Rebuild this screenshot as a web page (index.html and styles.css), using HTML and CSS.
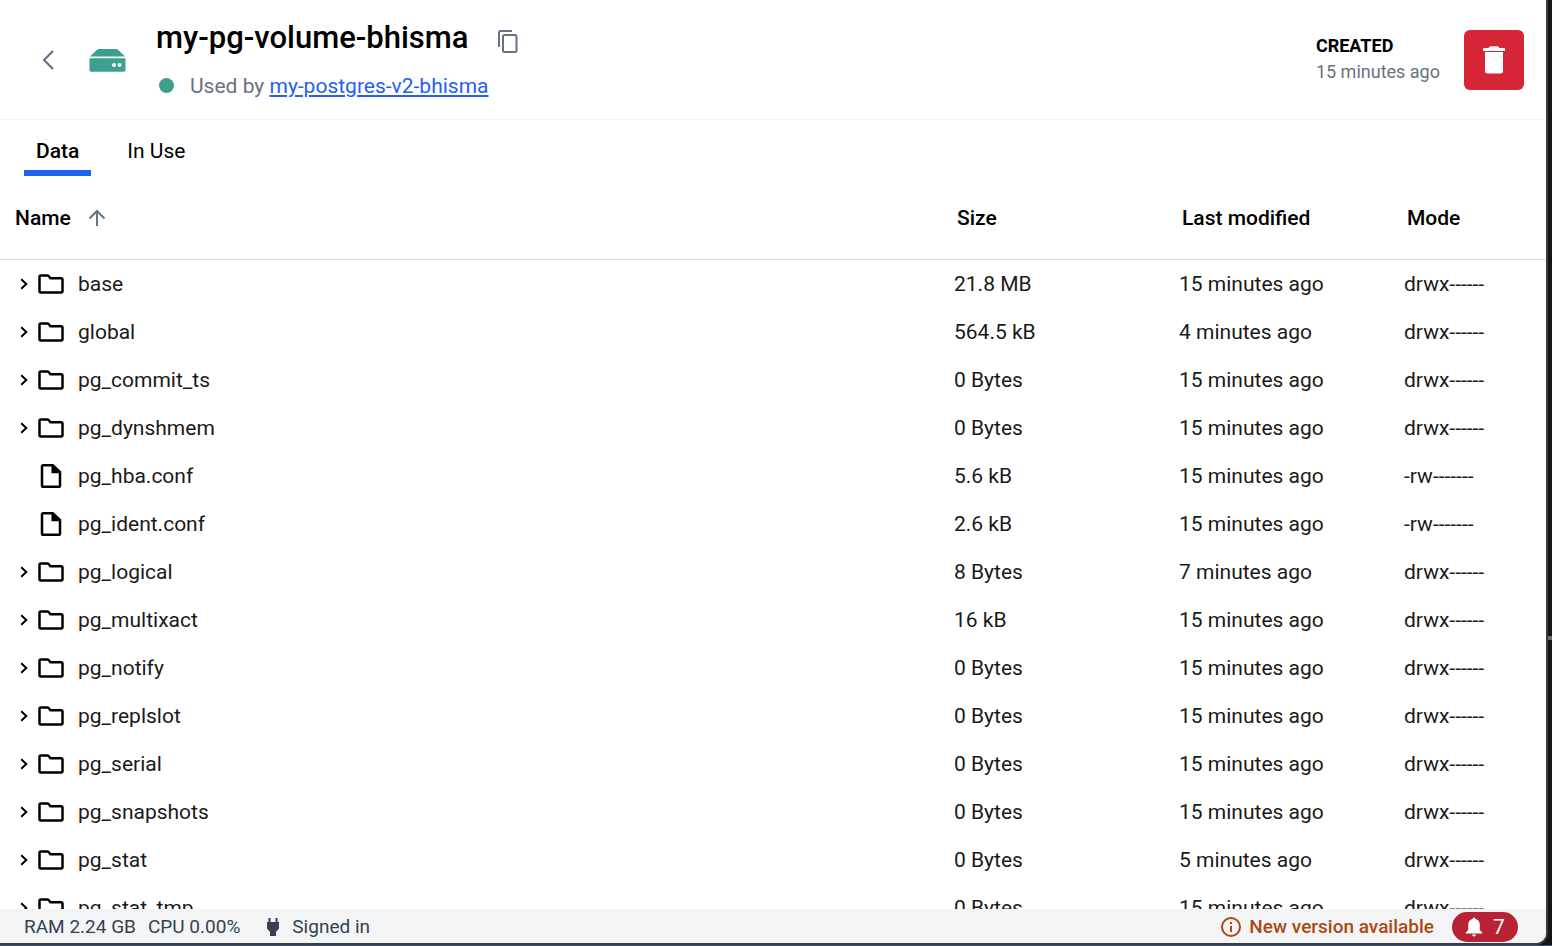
FILE: index.html
```html
<!DOCTYPE html>
<html lang="en">
<head>
<meta charset="utf-8">
<title>my-pg-volume-bhisma</title>
<link rel="stylesheet" href="styles.css">
</head>
<body>
<svg class="sprite" aria-hidden="true">
  <symbol id="chevron" viewBox="0 0 8 12"><path d="M1.2 1.2 6.3 6l-5.1 4.8" fill="none" stroke="currentColor" stroke-width="2"/></symbol>
  <symbol id="folder" viewBox="0 0 26 20"><path d="M1.5 17V2.800Q1.500 1.500 2.800 1.500h6.400q1 0 1.600.8l1.600 1.900h10.500q1.600 0 1.600 1.600V17q0 1.500-1.600 1.500H2.800Q1.500 18.500 1.500 17Z" fill="none" stroke="currentColor" stroke-width="2.500"/></symbol>
  <symbol id="file" viewBox="0 0 26 26"><path d="M4 3.500Q4 2.200 5.300 2.200h9.400L22 9v13.500q0 1.300-1.300 1.300H5.300Q4 23.800 4 22.500Z" fill="none" stroke="currentColor" stroke-width="2.500"/><path d="M13.500 1.500h1.800l7 7v1.700h-8.800Z"/></symbol>
</svg>
<div class="window">
  <header class="header">
    <button class="icon-button back" aria-label="Back"><svg width="12" height="20" viewBox="0 0 12 20"><path d="M11 1 2 10l9 9" fill="none" stroke="currentColor" stroke-width="2.200"/></svg></button>
    <svg class="drive" width="37" height="24" viewBox="0 0 37 24"><path d="M10 1h17q1 0 2 .7L36 8.500H1l7-6.800Q9 1 10 1ZM1 10.200h35.500V22q0 1.700-1.500 1.700H2Q.5 23.700.5 22V10.200Z" fill="#3ca08e"/><circle cx="25" cy="17" r="2" fill="#fff"/><circle cx="30.500" cy="17" r="2" fill="#fff"/></svg>
    <div class="heading">
      <div class="title-line">
        <h1>my-pg-volume-bhisma</h1>
        <button class="icon-button" aria-label="Copy name"><svg width="20" height="24" viewBox="0 0 20 24"><path d="M1 17V2.500Q1 1 2.500 1H14M6.500 5H17q1.500 0 1.500 1.500v14q0 1.500-1.500 1.500H6.500Q5 22 5 20.500v-14Q5 5 6.500 5Z" fill="none" stroke="currentColor" stroke-width="2"/></svg></button>
      </div>
      <p class="usage"><span class="dot"></span><span>Used by <a href="#container">my-postgres-v2-bhisma</a></span></p>
    </div>
    <div class="created"><strong>CREATED</strong><span>15 minutes ago</span></div>
    <button class="delete" aria-label="Delete volume"><svg width="22" height="28" viewBox="0 0 22 28"><path d="M0 2h5.500q.5-1.700 2.500-1.700h6q2 0 2.500 1.700H22v3H0ZM2 6h18v19q0 2.500-2.500 2.500h-13Q2 27.500 2 25Z" fill="currentColor"/></svg></button>
  </header>
  <nav class="tabs">
    <button class="tab active">Data</button>
    <button class="tab">In Use</button>
  </nav>
  <main class="files">
    <table>
      <colgroup><col><col class="col-size"><col class="col-modified"><col class="col-mode"></colgroup>
      <thead><tr>
        <th><span class="sort">Name <svg width="18" height="18" viewBox="0 0 18 18"><path d="M9 17V2M1.500 9.500 9 2l7.500 7.500" fill="none" stroke="#677285" stroke-width="2"/></svg></span></th>
        <th>Size</th><th>Last modified</th><th>Mode</th>
      </tr></thead>
      <tbody id="rows"></tbody>
    </table>
  </main>
  <footer class="status">
    <span>RAM 2.24 GB</span>
    <span>CPU 0.00%</span>
    <span class="signed"><svg width="14" height="20" viewBox="0 0 14 20"><path d="M2.500 1h2v4h5V1h2v4H13v6.500L10 15v4H4v-4l-3-3.500V5h1.500Z" fill="#364150"/></svg>Signed in</span>
    <a class="update" href="#update"><svg width="20" height="20" viewBox="0 0 20 20"><circle cx="10" cy="10" r="9" fill="none" stroke="currentColor" stroke-width="2"/><path d="M9 5h2v2H9zM9 9h2v6H9z" fill="currentColor"/></svg>New version available</a>
    <button class="alerts" aria-label="7 notifications"><svg width="18" height="20" viewBox="0 0 18 20"><path d="M9 .5q1.400 0 1.400 1.600 4.400 1 4.400 6V13l2.400 2.500v1H.8v-1L3.200 13V8.100q0-5 4.400-6Q7.600.5 9 .5ZM7 17.500h4Q10.700 19.500 9 19.500T7 17.500Z" fill="currentColor"/></svg>7</button>
  </footer>
</div>
<script src="files.js"></script>
</body>
</html>
```
FILE: styles.css
```css
* { box-sizing: border-box; }
html { height: 100%; background: #151515; }
body {
  height: 100vh;
  margin: 0;
  padding-right: 4px;
  border-bottom: 1px solid #3b5276;
  overflow: hidden;
  background: linear-gradient(#6b6b6b, #6b6b6b) 0 636px / 100% 4px no-repeat #151515;
  font-family: Roboto, "Liberation Sans", sans-serif;
  font-size: 21px;
  line-height: 24px;
  color: #000;
}
button { padding: 0; border: 0; background: none; font: inherit; color: inherit; cursor: pointer; }
svg { display: block; flex: none; }
.sprite { position: absolute; width: 0; height: 0; }
.window {
  display: flex;
  flex-direction: column;
  height: 100%;
  border: solid #3c3c3c;
  border-width: 0 2px 2px 0;
  border-bottom-right-radius: 12px;
  overflow: hidden;
  background: #fff;
}
.header {
  display: flex;
  flex: none;
  align-items: center;
  height: 120px;
  padding: 0 22px 0 42px;
  border-bottom: 1px solid #f0f1f3;
}
.icon-button { color: #677285; }
.drive { margin: 0 30px 0 35px; }
.heading { flex: 1; padding-bottom: 4px; }
.title-line { display: flex; align-items: center; gap: 29px; }
h1 { margin: 0; font-size: 31px; line-height: 40px; font-weight: 500; }
.title-line .icon-button { padding-top: 8px; }
.usage { display: flex; align-items: center; gap: 16px; margin: 16px 0 0 3px; color: #677285; }
.dot { width: 15px; height: 15px; border-radius: 50%; background: #3ca08e; }
.usage a { color: #2560f0; }
.created { display: flex; flex-direction: column; margin-right: 24px; padding-bottom: 2px; font-size: 18px; line-height: 26px; color: #677285; }
.created strong { font-weight: 700; color: #000; }
.delete { display: grid; place-items: center; width: 60px; height: 60px; border-radius: 6px; background: #d52536; color: #fff; }
.tabs { display: flex; flex: none; gap: 24px; height: 56px; padding-left: 24px; }
.tab { padding: 12px 12px 0; border-bottom: 6px solid transparent; }
.tab.active { border-color: #1d63ed; font-weight: 500; }
.files { flex: 1; min-height: 0; overflow: hidden; }
table { width: 100%; border-collapse: separate; border-spacing: 0; table-layout: fixed; }
.col-size, .col-modified { width: 225px; }
.col-mode { width: 157px; }
th { height: 84px; padding: 0 18px; border-bottom: 1px solid #dcdee1; font-weight: 500; text-align: left; }
th:first-child { padding-left: 15px; }
.sort { display: flex; align-items: center; gap: 17px; }
td { height: 48px; padding: 0 15px; color: #1a1a1a; }
td:first-child { padding-left: 20px; }
.entry { display: flex; align-items: center; color: #000; }
.toggle { width: 8px; height: 12px; margin-right: 10px; }
.glyph { width: 26px; height: 26px; margin-right: 14px; }
.entry span { color: #1a1a1a; }
.status {
  display: flex;
  flex: none;
  align-items: center;
  height: 34px;
  padding: 2px 28px 0 24px;
  gap: 12px;
  background: #f3f4f6;
  font-size: 19px;
  color: #364150;
}
.signed { display: flex; align-items: center; gap: 12px; margin-left: 14px; }
.update { display: flex; align-items: center; gap: 8px; margin: 0 6px 0 auto; font-weight: 500; color: #ac4812; text-decoration: none; }
.alerts { display: flex; align-items: center; justify-content: center; gap: 10px; width: 66px; height: 30px; border-radius: 15px; background: #b92235; color: #fff; font-size: 21px; }
```
FILE: files.js
```js
const files = [
  ["base", "21.8 MB", "15 minutes ago"],
  ["global", "564.5 kB", "4 minutes ago"],
  ["pg_commit_ts", "0 Bytes", "15 minutes ago"],
  ["pg_dynshmem", "0 Bytes", "15 minutes ago"],
  ["pg_hba.conf", "5.6 kB", "15 minutes ago"],
  ["pg_ident.conf", "2.6 kB", "15 minutes ago"],
  ["pg_logical", "8 Bytes", "7 minutes ago"],
  ["pg_multixact", "16 kB", "15 minutes ago"],
  ["pg_notify", "0 Bytes", "15 minutes ago"],
  ["pg_replslot", "0 Bytes", "15 minutes ago"],
  ["pg_serial", "0 Bytes", "15 minutes ago"],
  ["pg_snapshots", "0 Bytes", "15 minutes ago"],
  ["pg_stat", "0 Bytes", "5 minutes ago"],
  ["pg_stat_tmp", "0 Bytes", "15 minutes ago"]
];

document.getElementById("rows").innerHTML = files.map(([name, size, modified]) => {
  const isFile = name.endsWith(".conf");
  const toggle = isFile
    ? '<div class="toggle"></div>'
    : `<button class="toggle" aria-label="Expand ${name}"><svg width="8" height="12"><use href="#chevron"/></svg></button>`;
  const glyph = isFile
    ? '<svg class="glyph"><use href="#file"/></svg>'
    : '<svg class="glyph"><use href="#folder"/></svg>';
  return `<tr>
    <td><div class="entry">${toggle}${glyph}<span>${name}</span></div></td>
    <td>${size}</td><td>${modified}</td><td>${isFile ? "-rw-------" : "drwx------"}</td>
  </tr>`;
}).join("");
```
